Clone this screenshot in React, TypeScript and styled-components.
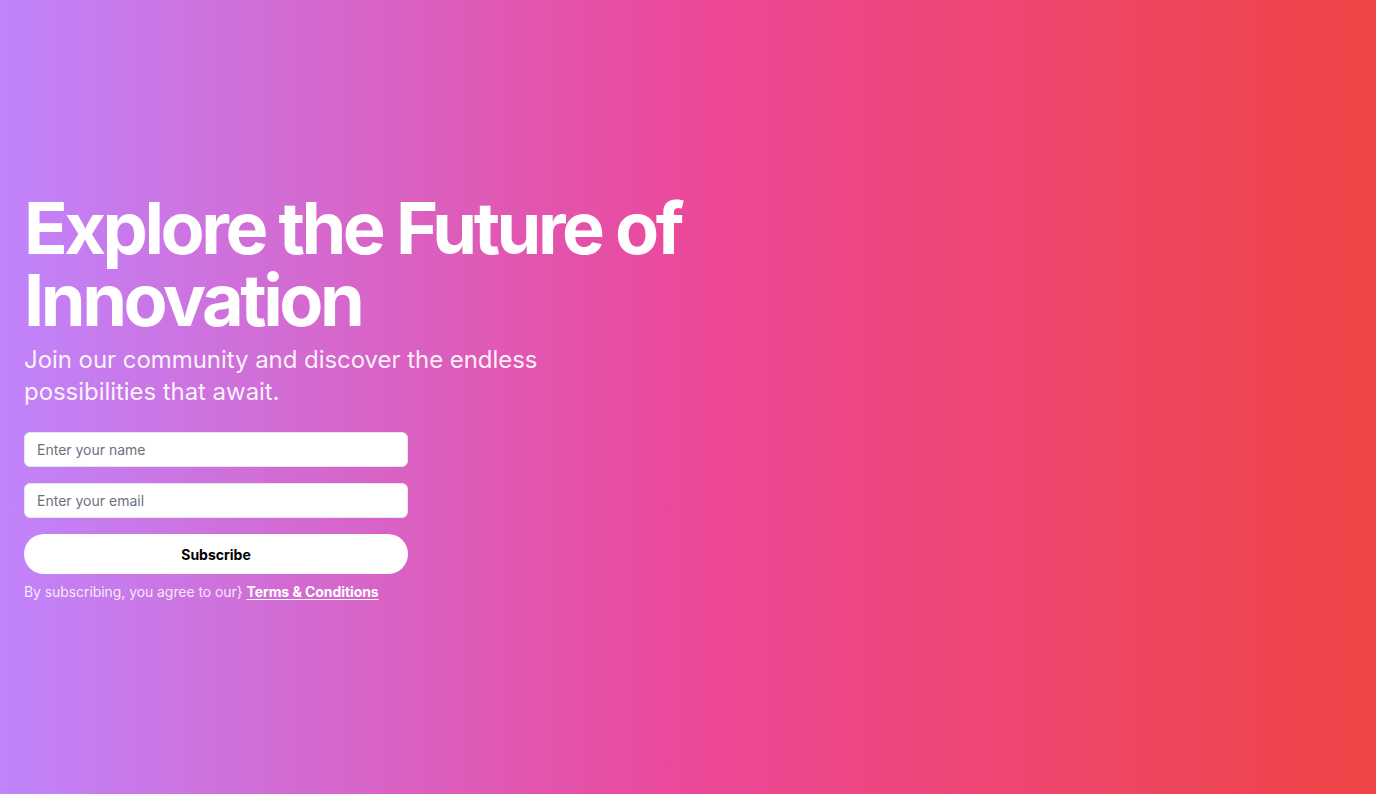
import styled, { createGlobalStyle } from 'styled-components';

const GlobalStyle = createGlobalStyle`
  html, body {
    margin: 0;
    padding: 0;
  }
  body {
    font-family: Inter, "Noto Sans", sans-serif;
  }
  * {
    box-sizing: border-box;
  }
`;

export default function App() {
  return (
    <>
      <GlobalStyle />
      <Hero>
        <Content>
          <Heading>Explore the Future of Innovation</Heading>
          <Lead>Join our community and discover the endless possibilities that await.</Lead>
          <Form onSubmit={(e) => e.preventDefault()}>
            <Field type="text" placeholder="Enter your name" />
            <Field type="email" placeholder="Enter your email" />
            <SubmitButton type="submit">Subscribe</SubmitButton>
          </Form>
          <Note>
            {'By subscribing, you agree to our} '}
            <NoteLink href="#">Terms &amp; Conditions</NoteLink>
          </Note>
        </Content>
      </Hero>
    </>
  );
}

const Hero = styled.section`
  min-height: 100vh;
  width: 100%;
  display: flex;
  align-items: center;
  background: linear-gradient(to right, #c084fc, #ec4899, #ef4444);
  color: #fff;
`;

const Content = styled.div`
  padding: 0 24px;
  display: flex;
  flex-direction: column;
`;

const Heading = styled.h1`
  margin: 0;
  max-width: 690px;
  font-size: 72px;
  line-height: 1;
  font-weight: 700;
  letter-spacing: -0.048em;
`;

const Lead = styled.p`
  margin: 8px 0 0;
  max-width: 600px;
  font-size: 24px;
  line-height: 32px;
  font-weight: 400;
  letter-spacing: -0.05px;
  color: rgba(255, 255, 255, 0.92);
`;

const Form = styled.form`
  margin-top: 24px;
  width: 384px;
  display: flex;
  flex-direction: column;
  gap: 16px;
`;

const Field = styled.input`
  height: 35px;
  padding: 0 12px;
  border: 1px solid #e5e7eb;
  border-radius: 6px;
  background: #fff;
  font-family: inherit;
  font-size: 14px;
  color: #111827;
  outline: none;
  &::placeholder {
    color: #6b7280;
  }
`;

const SubmitButton = styled.button`
  height: 40px;
  border: none;
  border-radius: 9999px;
  background: #fff;
  color: #000;
  font-family: inherit;
  font-size: 14px;
  font-weight: 700;
  cursor: pointer;
`;

const Note = styled.p`
  margin: 8px 0 0;
  font-size: 14px;
  line-height: 20px;
  letter-spacing: -0.005em;
  color: rgba(255, 255, 255, 0.85);
`;

const NoteLink = styled.a`
  color: #fff;
  font-weight: 700;
  text-decoration: underline;
  text-underline-offset: 2px;
`;
